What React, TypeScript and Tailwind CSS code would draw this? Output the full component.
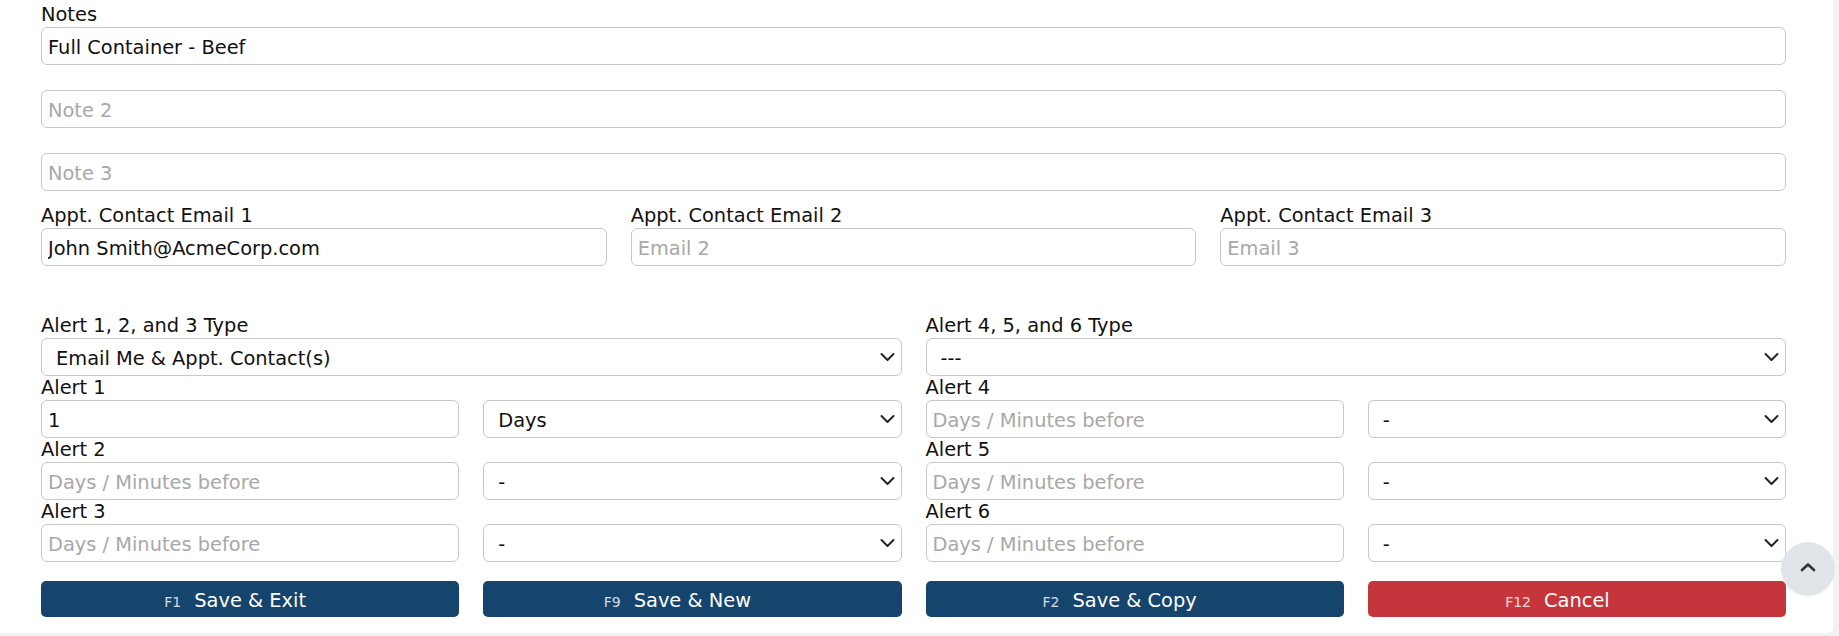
import React from 'react';

const inputClass =
  "block w-full h-[38px] px-[6px] pt-[3px] border border-[#c8c8c8] rounded-[6px] bg-white text-[#111] outline-none placeholder:text-[#a8a8a8]";

const labelClass = "block leading-[24px] text-[#111]";

function Chevron({ className }: { className?: string }) {
  return (
    <svg className={className} width="15" height="10" viewBox="0 0 15 10" fill="none" xmlns="http://www.w3.org/2000/svg">
      <path d="M1.5 2L7.5 8L13.5 2" stroke="#222" strokeWidth="2" strokeLinecap="round" strokeLinejoin="round" />
    </svg>
  );
}

function SelectBox({ value, options, className = "" }: { value: string; options: string[]; className?: string }) {
  return (
    <div className={"relative " + className}>
      <select
        defaultValue={value}
        className="block w-full h-[38px] pl-[14px] pr-10 pt-[3px] border border-[#c8c8c8] rounded-[6px] bg-white text-[#111] outline-none appearance-none"
      >
        {options.map((o) => (
          <option key={o}>{o}</option>
        ))}
      </select>
      <Chevron className="pointer-events-none absolute right-[7px] top-[14px]" />
    </div>
  );
}

function ActionButton({ fkey, label, red }: { fkey: string; label: string; red?: boolean }) {
  return (
    <button
      type="button"
      className={
        "grid grid-cols-[1fr_auto_1fr] items-baseline content-center pt-[3px] h-[36px] rounded-[5px] text-white " +
        (red ? "bg-[#c4363b]" : "bg-[#15446d]")
      }
    >
      <span className="justify-self-end pr-[13px] text-[14px] text-white/80">{fkey}</span>
      <span>{label}</span>
      <span />
    </button>
  );
}

const unitOptions = ["-", "Days", "Minutes"];

export default function App() {
  const leftAlerts = [
    { name: "Alert 1", value: "1", unit: "Days" },
    { name: "Alert 2", value: "", unit: "-" },
    { name: "Alert 3", value: "", unit: "-" },
  ];
  const rightAlerts = ["Alert 4", "Alert 5", "Alert 6"];

  return (
    <div className="min-h-[636px] bg-[#f2f2f4] font-['DejaVu_Sans',sans-serif] text-[19.4px]">
      <div className="w-[1833px] h-[633px] bg-white rounded-br-[6px] pl-[41px] pr-[47px] pt-[3px]">
        <label className={labelClass}>Notes</label>
        <input className={inputClass} defaultValue="Full Container - Beef" />
        <input className={inputClass + " mt-[25px]"} placeholder="Note 2" />
        <input className={inputClass + " mt-[25px]"} placeholder="Note 3" />

        <div className="grid grid-cols-3 gap-x-6 mt-[13px]">
          <div>
            <label className={labelClass}>Appt. Contact Email 1</label>
            <input className={inputClass} defaultValue="John Smith@AcmeCorp.com" />
          </div>
          <div>
            <label className={labelClass}>Appt. Contact Email 2</label>
            <input className={inputClass} placeholder="Email 2" />
          </div>
          <div>
            <label className={labelClass}>Appt. Contact Email 3</label>
            <input className={inputClass} placeholder="Email 3" />
          </div>
        </div>

        <div className="grid grid-cols-4 gap-x-6 mt-[48px]">
          <label className={labelClass + " col-span-2"}>Alert 1, 2, and 3 Type</label>
          <label className={labelClass + " col-span-2"}>Alert 4, 5, and 6 Type</label>
          <SelectBox className="col-span-2" value="Email Me & Appt. Contact(s)" options={["---", "Email Me", "Email Me & Appt. Contact(s)"]} />
          <SelectBox className="col-span-2" value="---" options={["---", "Email Me", "Email Me & Appt. Contact(s)"]} />

          {leftAlerts.map((a, i) => (
            <React.Fragment key={a.name}>
              <label className={labelClass + " col-span-2"}>{a.name}</label>
              <label className={labelClass + " col-span-2"}>{rightAlerts[i]}</label>
              <input className={inputClass} defaultValue={a.value} placeholder="Days / Minutes before" />
              <SelectBox value={a.unit} options={unitOptions} />
              <input className={inputClass} placeholder="Days / Minutes before" />
              <SelectBox value="-" options={unitOptions} />
            </React.Fragment>
          ))}
        </div>

        <div className="grid grid-cols-4 gap-x-6 mt-[19px]">
          <ActionButton fkey="F1" label="Save & Exit" />
          <ActionButton fkey="F9" label="Save & New" />
          <ActionButton fkey="F2" label="Save & Copy" />
          <ActionButton fkey="F12" label="Cancel" red />
        </div>
      </div>

      <button
        type="button"
        aria-label="Back to top"
        className="fixed right-[4px] bottom-[40px] w-[54px] h-[54px] rounded-full bg-[#e1e4e9] flex items-center justify-center"
      >
        <svg width="16" height="10" viewBox="0 0 16 10" fill="none" xmlns="http://www.w3.org/2000/svg" className="-mt-[5px]">
          <path d="M2 8L8 2.5L14 8" stroke="#333" strokeWidth="2.6" strokeLinecap="round" strokeLinejoin="round" />
        </svg>
      </button>
    </div>
  );
}
